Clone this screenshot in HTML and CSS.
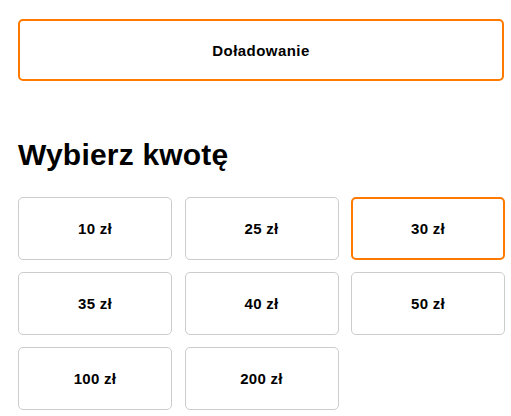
FILE: index.html
```html
<!DOCTYPE html>
<html lang="pl">
<head>
<meta charset="utf-8">
<link rel="stylesheet" href="styles.css">
</head>
<body>
<div class="page">
  <button class="tab">Doładowanie</button>
  <h1 class="title">Wybierz kwotę</h1>
  <div class="grid">
    <button class="tile">10 zł</button>
    <button class="tile">25 zł</button>
    <button class="tile selected">30 zł</button>
    <button class="tile">35 zł</button>
    <button class="tile">40 zł</button>
    <button class="tile">50 zł</button>
    <button class="tile">100 zł</button>
    <button class="tile">200 zł</button>
  </div>
</div>
</body>
</html>
```
FILE: styles.css
```css
html, body {
  margin: 0;
  padding: 0;
  background: #fff;
}
body {
  font-family: "Liberation Sans", Arial, sans-serif;
  color: #000;
}
.page {
  width: 487px;
  padding: 19px 0 0 18px;
}
.tab {
  display: block;
  box-sizing: border-box;
  width: 486px;
  height: 62px;
  border: 2px solid #ff7900;
  border-radius: 5px;
  background: #fff;
  font-family: inherit;
  font-weight: bold;
  font-size: 15px;
  letter-spacing: 0.45px;
  color: #000;
  padding: 0;
}
.title {
  margin: 56px 0 0 0;
  font-size: 30px;
  line-height: 36px;
  font-weight: bold;
  letter-spacing: 0.2px;
}
.grid {
  margin-top: 24px;
  display: grid;
  grid-template-columns: repeat(3, 1fr);
  column-gap: 12.5px;
  row-gap: 12px;
}
.tile {
  box-sizing: border-box;
  height: 63px;
  border: 1px solid #cccccc;
  border-radius: 5px;
  background: #fff;
  font-family: inherit;
  font-weight: bold;
  font-size: 15px;
  letter-spacing: 0.3px;
  color: #000;
  padding: 0;
}
.tile.selected {
  border: 2px solid #ff7900;
}
```
